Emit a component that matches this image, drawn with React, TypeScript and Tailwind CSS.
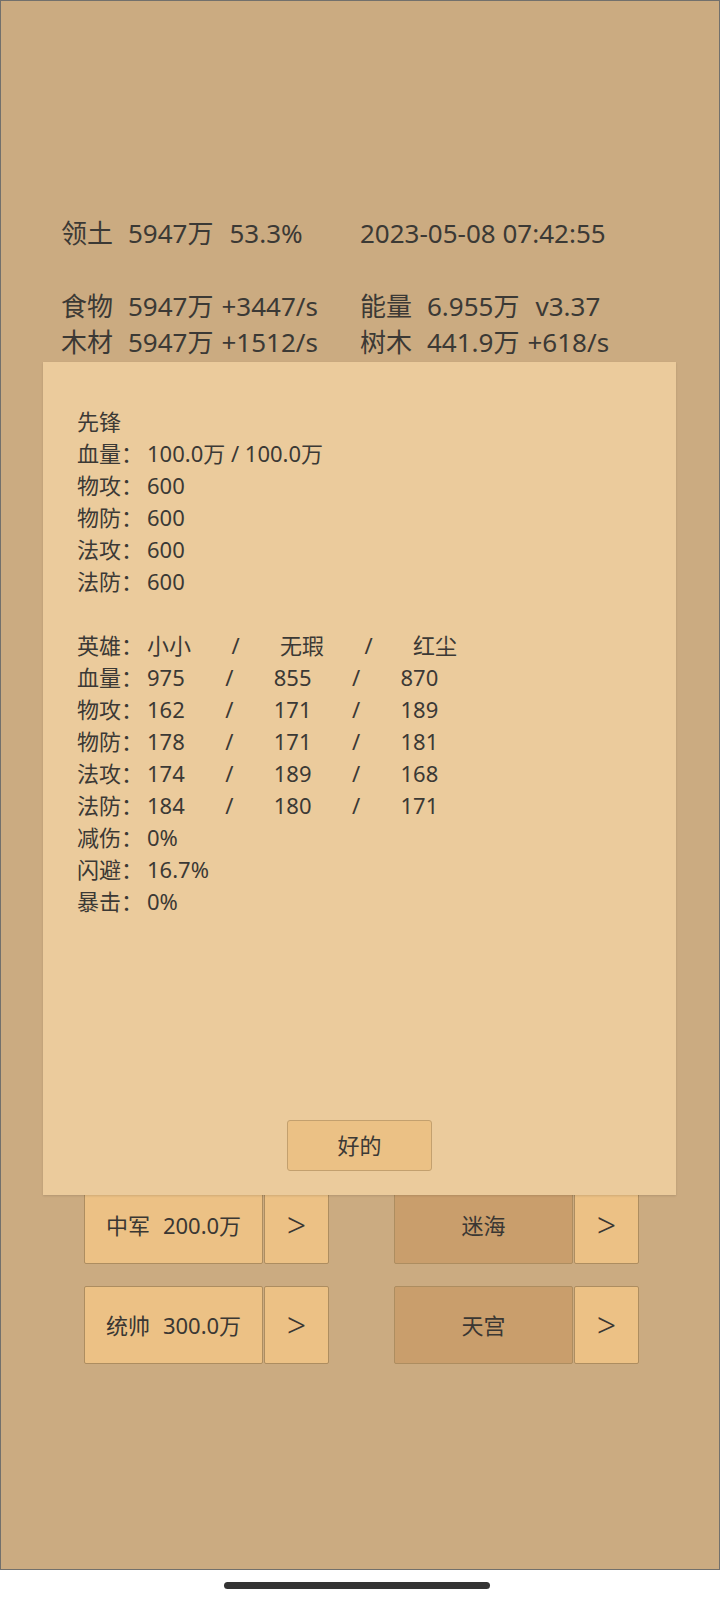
import React from 'react';

const font = { fontFamily: '"Noto Sans", "Noto Sans CJK SC", sans-serif' };

const headerRows: [string, string, string, number][][] = [
  [
    ['领土', '5947万', '53.3%', 16],
    ['', '2023-05-08 07:42:55', '', 0],
  ],
  [],
  [
    ['食物', '5947万', '+3447/s', 8],
    ['能量', '6.955万', 'v3.37', 16],
  ],
  [
    ['木材', '5947万', '+1512/s', 8],
    ['树木', '441.9万', '+618/s', 8],
  ],
];

const vanguard = [
  ['血量', '100.0万 / 100.0万'],
  ['物攻', '600'],
  ['物防', '600'],
  ['法攻', '600'],
  ['法防', '600'],
];

const heroes = [
  ['英雄', '小小', '无瑕', '红尘'],
  ['血量', '975', '855', '870'],
  ['物攻', '162', '171', '189'],
  ['物防', '178', '171', '181'],
  ['法攻', '174', '189', '168'],
  ['法防', '184', '180', '171'],
];

const extras = [
  ['减伤', '0%'],
  ['闪避', '16.7%'],
  ['暴击', '0%'],
];

const HeaderCell: React.FC<{ cell: [string, string, string, number] }> = ({ cell }) => {
  const [label, value, extra, gap] = cell;
  return (
    <div className="flex whitespace-nowrap">
      {label && <span className="inline-block w-[67px]">{label}</span>}
      <span>{value}</span>
      {extra && <span style={{ marginLeft: gap }}>{extra}</span>}
    </div>
  );
};

const Label: React.FC<{ text: string }> = ({ text }) => (
  <span className="inline-block w-[70px]">{text}：</span>
);

const Sep = () => <span className="inline-block w-[89px] text-center">/</span>;

const ActionPair: React.FC<{ text: React.ReactNode; dark?: boolean }> = ({ text, dark }) => (
  <div className="flex gap-px">
    <div
      className={`w-[179px] h-[78px] flex items-center justify-center rounded-[2px] border border-[#ad8d60] text-[22px] text-[#3a3733] ${
        dark ? 'bg-[#c99e6c]' : 'bg-[#ecc185]'
      }`}
    >
      {text}
    </div>
    <div className="w-[65px] h-[78px] flex items-center justify-center rounded-[2px] border border-[#ad8d60] bg-[#ecc185] text-[34px] font-light text-[#3a3733]">
      &gt;
    </div>
  </div>
);

const Cost: React.FC<{ name: string; cost: string }> = ({ name, cost }) => (
  <span className="flex gap-[13px]">
    <span>{name}</span>
    <span>{cost}</span>
  </span>
);

export default function App() {
  return (
    <div className="w-[720px] h-[1600px] bg-white" style={font}>
      <div className="relative h-[1570px] border border-[#72706c] bg-[#cbab81]">
        <div className="pt-[214px] pl-[60px] text-[26px] leading-[36.3px] text-[#3b3935]">
          {headerRows.map((row, i) => (
            <div key={i} className="grid grid-cols-[299px_1fr] h-[36.3px]">
              {row.map((cell, j) => (
                <HeaderCell key={j} cell={cell} />
              ))}
            </div>
          ))}
        </div>

        <div className="mt-[826px] pl-[83px] flex flex-col gap-[22px]">
          <div className="flex gap-[65px]">
            <ActionPair text={<Cost name="中军" cost="200.0万" />} />
            <ActionPair text="迷海" dark />
          </div>
          <div className="flex gap-[65px]">
            <ActionPair text={<Cost name="统帅" cost="300.0万" />} />
            <ActionPair text="天宫" dark />
          </div>
        </div>

        <div className="absolute left-[42px] top-[361px] w-[633px] h-[833px] bg-[#ebcb9c] shadow-[0_1px_2px_rgba(0,0,0,0.12)] flex flex-col">
          <div className="flex-1 pt-[43px] pl-[34px] text-[22px] leading-[32px] text-[#3b3935] whitespace-nowrap">
            <div>先锋</div>
            {vanguard.map(([l, v]) => (
              <div key={l}>
                <Label text={l} />
                <span>{v}</span>
              </div>
            ))}
            <div className="h-[32px]" />
            {heroes.map(([l, a, b, c]) => (
              <div key={l + a}>
                <Label text={l} />
                <span>{a}</span>
                <Sep />
                <span>{b}</span>
                <Sep />
                <span>{c}</span>
              </div>
            ))}
            {extras.map(([l, v]) => (
              <div key={l}>
                <Label text={l} />
                <span>{v}</span>
              </div>
            ))}
          </div>
          <div className="flex justify-center pb-[24px]">
            <button className="w-[145px] h-[51px] rounded-[3px] border border-[#c3a06e] bg-[#ebc185] text-[22px] text-[#3b3935]">
              好的
            </button>
          </div>
        </div>
      </div>
      <div className="mt-[12px] ml-[224px] w-[266px] h-[7px] rounded-full bg-[#333333]" />
    </div>
  );
}
